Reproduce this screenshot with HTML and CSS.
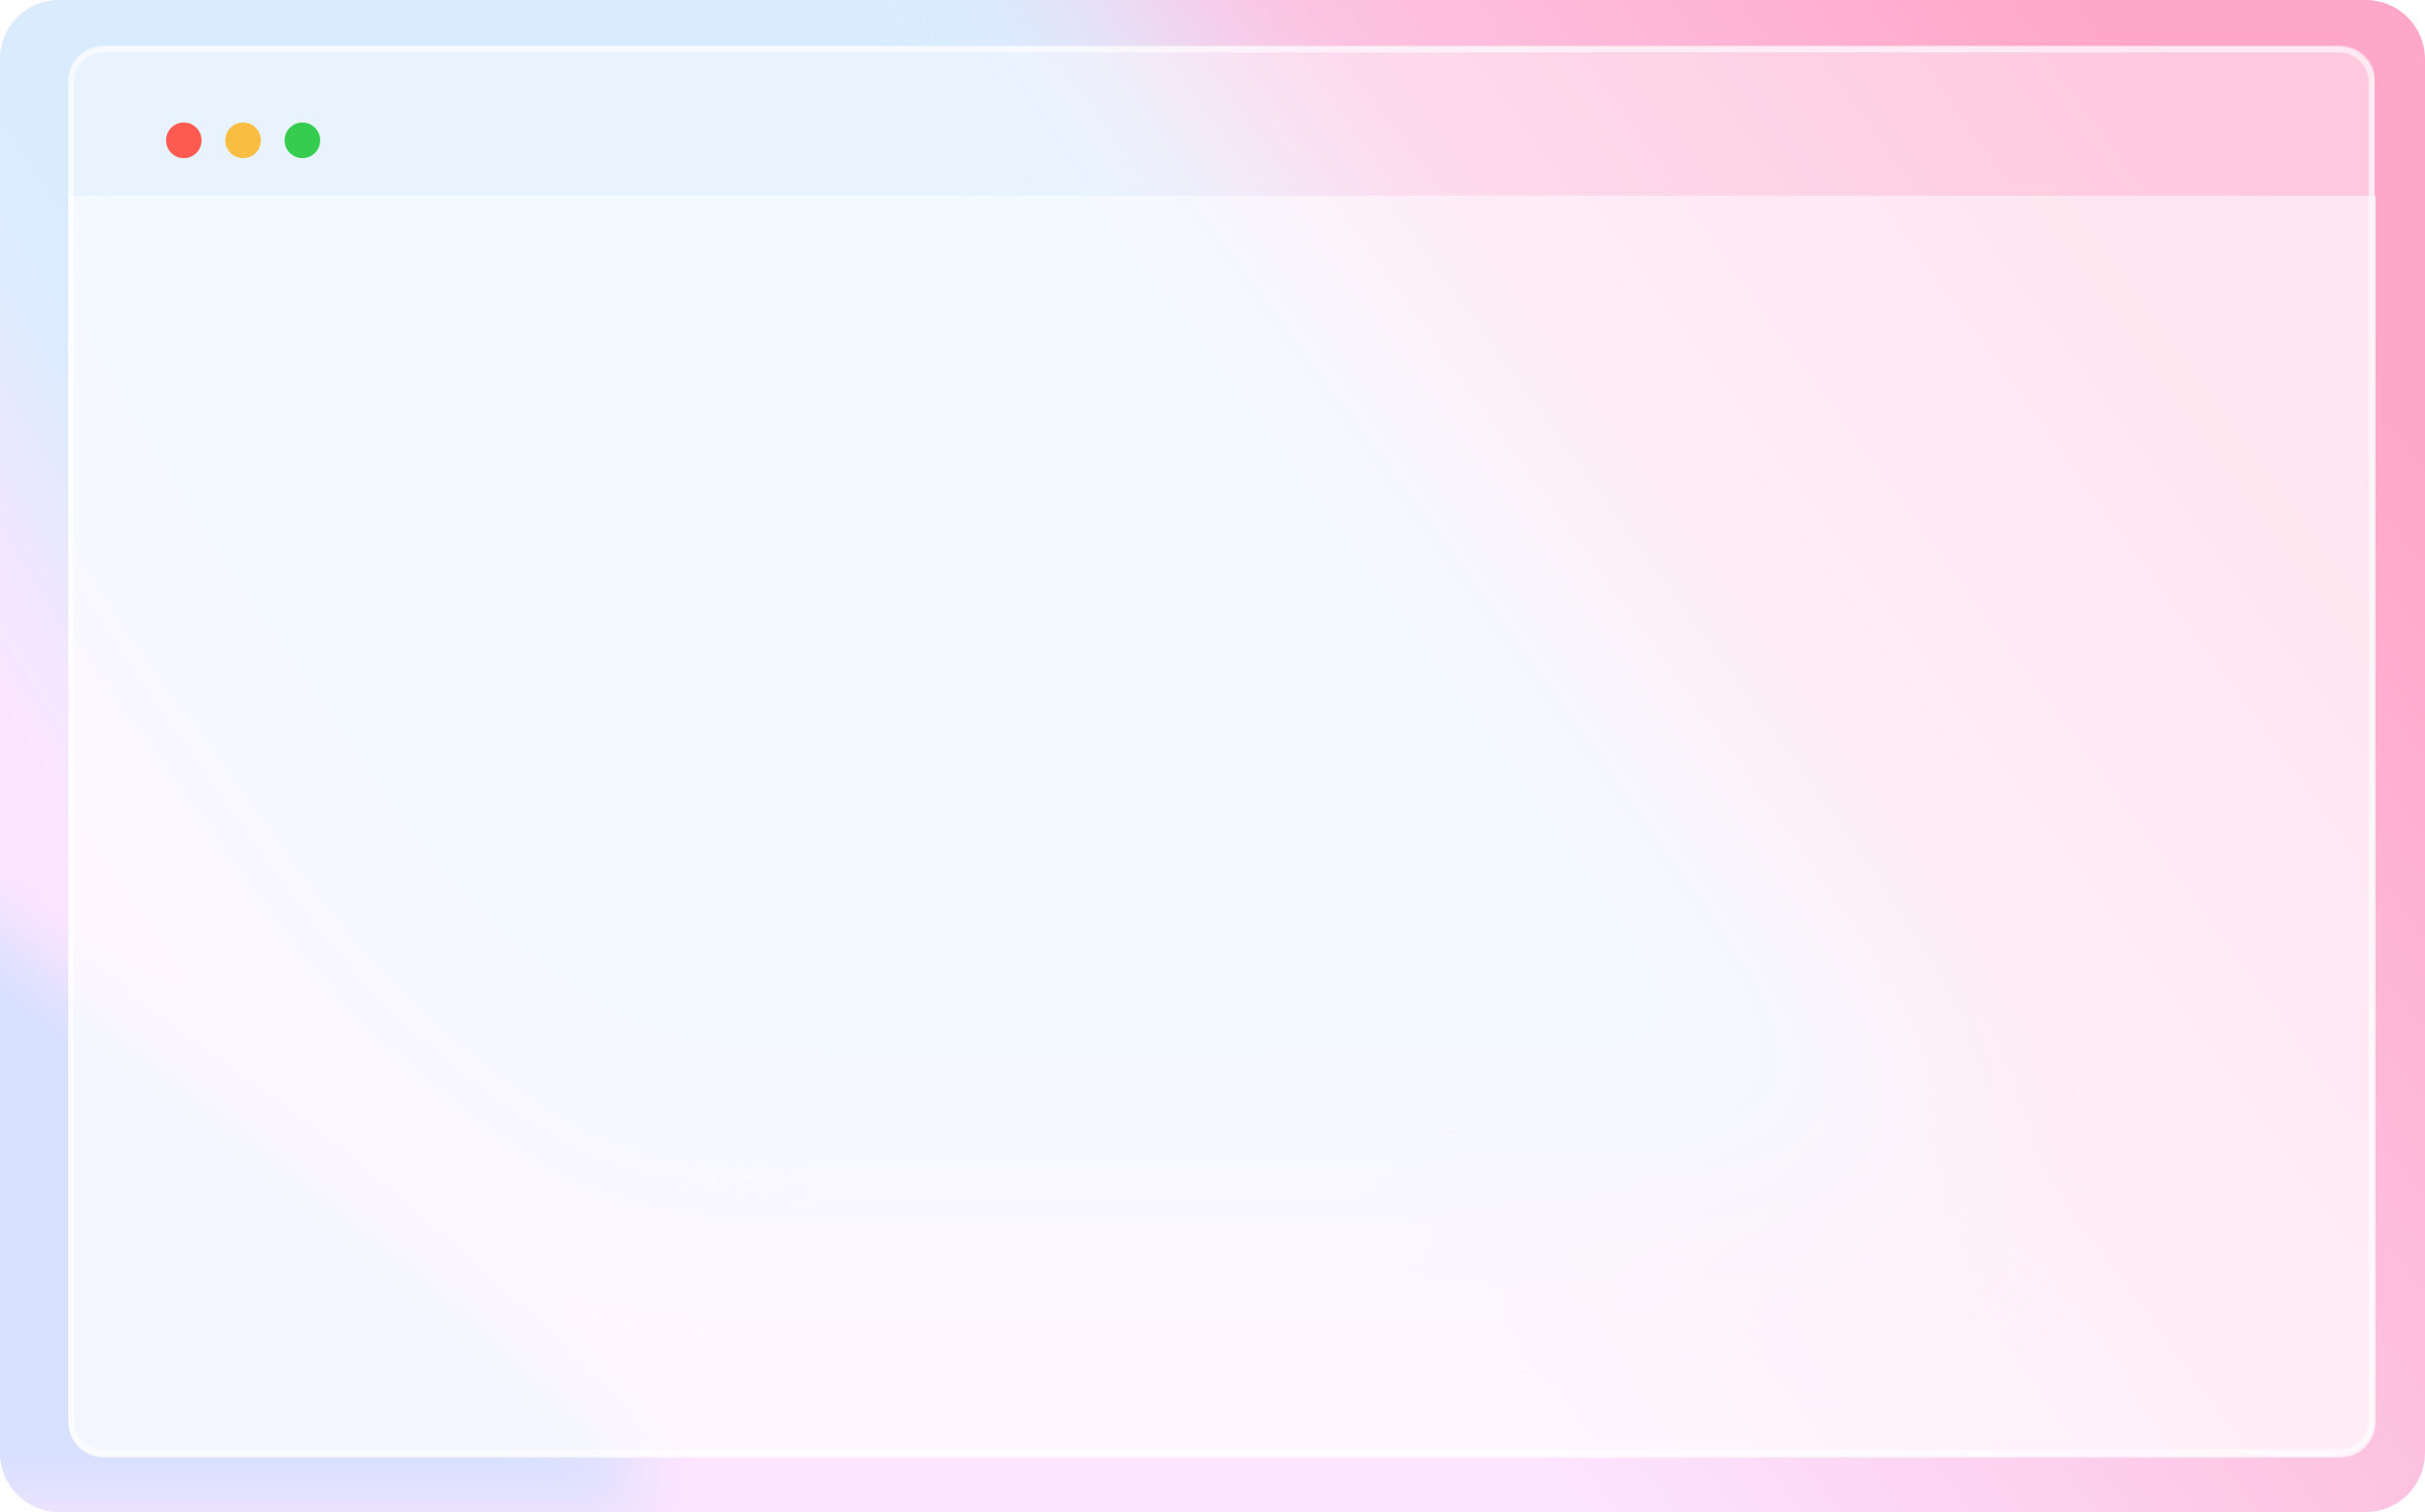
FILE: index.html
```html
<!DOCTYPE html>
<html lang="en">
<head>
<meta charset="utf-8">
<meta name="viewport" content="width=device-width, initial-scale=1">
<title>Window</title>
<link rel="stylesheet" href="styles.css">
</head>
<body>
<div class="desktop">
  <svg class="wallpaper" viewBox="0 0 2454 1530" preserveAspectRatio="none" aria-hidden="true">
    <defs>
      <linearGradient id="rose" gradientUnits="userSpaceOnUse" x1="1600" y1="1530" x2="2690" y2="731">
        <stop offset="0" stop-color="#fce5ff"/>
        <stop offset=".48" stop-color="#fdc4e3"/>
        <stop offset=".95" stop-color="#ffa8c9"/>
        <stop offset="1" stop-color="#ffa7c9"/>
      </linearGradient>
      <filter id="soft" filterUnits="userSpaceOnUse" x="-700" y="-700" width="3800" height="2900" color-interpolation-filters="sRGB">
        <feGaussianBlur stdDeviation="94"/>
      </filter>
      <filter id="crisp" filterUnits="userSpaceOnUse" x="-600" y="500" width="1800" height="1300" color-interpolation-filters="sRGB">
        <feGaussianBlur stdDeviation="32"/>
      </filter>
    </defs>
    <rect width="2454" height="1530" fill="url(#rose)"/>
    <path filter="url(#soft)" fill="#d9ecfe" d="M-500-500H900L1130 0L1280 200L1715 800L1910 1080Q1980 1210 1800 1200H620L370 1010L69 580L-50 370L-500-300Z"/>
    <path filter="url(#crisp)" fill="#d7e0ff" d="M-300 725L0 940L300 1175L500 1340L646 1480V1525H-300Z"/>
  </svg>
  <main class="window">
    <header class="titlebar">
      <button class="dot dot-close" type="button" aria-label="Close"></button>
      <button class="dot dot-minimize" type="button" aria-label="Minimize"></button>
      <button class="dot dot-zoom" type="button" aria-label="Zoom"></button>
    </header>
    <section class="content"></section>
  </main>
</div>
</body>
</html>
```
FILE: styles.css
```css
* {
  box-sizing: border-box;
}

body {
  margin: 0;
  background: #fff;
}

.desktop {
  position: relative;
  display: flex;
  min-height: 100vh;
  padding: 46px 50px 55px 69px;
  border-radius: 60px;
  overflow: hidden;
}

.wallpaper {
  position: absolute;
  inset: 0;
  width: 100%;
  height: 100%;
}

.window {
  position: relative;
  display: flex;
  flex: 1;
  flex-direction: column;
  border-radius: 36px;
  overflow: hidden;
}

/* Translucent rim laid over the title bar and the content */
.window::after {
  content: "";
  position: absolute;
  inset: 1px 1px 2px 0;
  border: 6px solid rgba(255, 255, 255, 0.6);
  border-radius: 36px;
  pointer-events: none;
}

.titlebar {
  display: flex;
  gap: 24px;
  margin-right: 1px;
  padding: 78px 99px 38px;
  background: rgba(255, 255, 255, 0.4);
}

.dot {
  width: 36px;
  height: 36px;
  padding: 0;
  border: 0;
  border-radius: 50%;
}

.dot-close {
  background: #ff5a50;
}

.dot-minimize {
  background: #f9bd42;
}

.dot-zoom {
  background: #35cc4f;
}

.content {
  flex: 1;
  background: rgba(255, 255, 255, 0.7);
}
```
